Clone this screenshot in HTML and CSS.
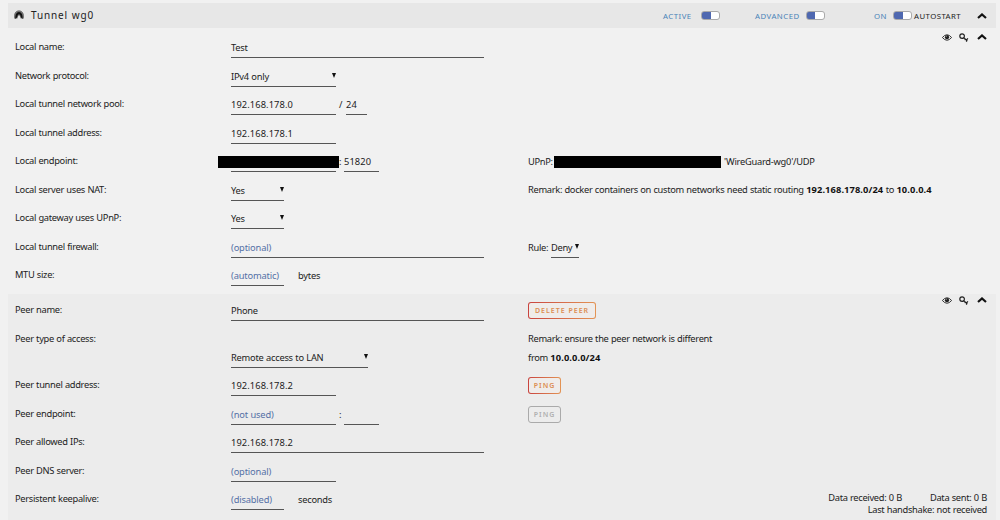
FILE: index.html
```html
<!DOCTYPE html>
<html lang="en">
<head>
  <meta charset="UTF-8">
  <title>Tunnel wg0</title>
  <link rel="stylesheet" href="styles.css">
</head>
<body>
  <!-- Icons used more than once -->
  <svg class="sprite">
    <symbol id="up" viewBox="0 0 10 6"><path d="M1 5.1 L5 1.4 L9 5.1" fill="none" stroke="#111" stroke-width="2.1"/></symbol>
    <symbol id="eye" viewBox="0 0 10 7">
      <path d="M.4 3.5 Q5 -2 9.6 3.5 Q5 9 .4 3.5Z" fill="none" stroke="#222" stroke-width=".9"/>
      <circle cx="5" cy="3.2" r="2.1" fill="#222"/>
      <path d="M3.9 3 Q4 2 5 1.9" fill="none" stroke="#ddd" stroke-width=".5"/>
    </symbol>
    <symbol id="key" viewBox="0 0 10 9">
      <circle cx="3.1" cy="3.1" r="2.3" fill="none" stroke="#222" stroke-width="1.2"/>
      <path d="M4.8 4.6 L8.3 8 M6.3 6 L5.5 6.8 M8 7.7 L7.1 8.5 M8.9 5.4 L7.4 7" fill="none" stroke="#222" stroke-width="1.2"/>
    </symbol>
  </svg>

  <div class="title-bar">
    <svg class="logo" viewBox="0 0 10 10">
      <path d="M.7 8.6 C-.3 4 1.6 .8 5 .8 C8.4 .8 10.3 4 9.3 8.6" fill="#777" stroke="#555" stroke-width=".6"/>
      <path d="M1.4 9 C1 5 2.4 2 5 2 C7.6 2 9 5 8.6 9 L6.7 7 L6.2 5 L5 4.2 L3.8 5 L3.3 7Z" fill="#111"/>
      <path d="M3.2 9.5 L4 6.6 L5 5.2 L6 6.6 L6.8 9.5Z" fill="#e8e8e8"/>
    </svg>
    <h1>Tunnel wg0</h1>
    <div class="switches">
      <span class="switch-label active-label">ACTIVE</span><span class="switch"></span>
      <span class="switch-label advanced-label">ADVANCED</span><span class="switch"></span>
      <span class="switch-label on-label">ON</span><span class="switch"></span>
      <span class="autostart">AUTOSTART</span>
      <svg class="up"><use href="#up"/></svg>
    </div>
  </div>

  <!-- Local side -->
  <div class="panel local">
    <div class="tools">
      <svg class="eye"><use href="#eye"/></svg>
      <svg class="key"><use href="#key"/></svg>
      <svg class="up"><use href="#up"/></svg>
    </div>
    <div class="row">
      <div class="label">Local name:</div>
      <div class="value"><span class="field wide">Test</span></div>
    </div>
    <div class="row">
      <div class="label">Network protocol:</div>
      <div class="value"><span class="field select medium">IPv4 only</span></div>
    </div>
    <div class="row">
      <div class="label">Local tunnel network pool:</div>
      <div class="value"><span class="field number medium">192.168.178.0</span><span class="slash">/</span><span class="field number mask">24</span></div>
    </div>
    <div class="row">
      <div class="label">Local tunnel address:</div>
      <div class="value"><span class="field number medium">192.168.178.1</span></div>
    </div>
    <div class="row">
      <div class="label">Local endpoint:</div>
      <div class="value"><span class="field medium"><span class="redacted address"></span></span><span class="colon">:</span><span class="field number port">51820</span></div>
      <div class="note"><span class="upnp">UPnP:</span><span class="redacted mapping"></span><span class="rule-name">'WireGuard-wg0'/UDP</span></div>
    </div>
    <div class="row">
      <div class="label">Local server uses NAT:</div>
      <div class="value"><span class="field select small">Yes</span></div>
      <div class="note remark">Remark: docker containers on custom networks need static routing <b>192.168.178.0/24</b> to <b>10.0.0.4</b></div>
    </div>
    <div class="row">
      <div class="label">Local gateway uses UPnP:</div>
      <div class="value"><span class="field select small">Yes</span></div>
    </div>
    <div class="row">
      <div class="label">Local tunnel firewall:</div>
      <div class="value"><span class="field empty wide">(optional)</span></div>
      <div class="note"><span class="rule">Rule:</span><span class="field select deny">Deny</span></div>
    </div>
    <div class="row">
      <div class="label">MTU size:</div>
      <div class="value"><span class="field empty small">(automatic)</span><span class="unit">bytes</span></div>
    </div>
  </div>

  <!-- Peer side -->
  <div class="panel peer">
    <div class="tools">
      <svg class="eye"><use href="#eye"/></svg>
      <svg class="key"><use href="#key"/></svg>
      <svg class="up"><use href="#up"/></svg>
    </div>
    <div class="row">
      <div class="label">Peer name:</div>
      <div class="value"><span class="field wide">Phone</span></div>
      <div class="note"><button class="delete">DELETE PEER</button></div>
    </div>
    <div class="row access">
      <div class="label">Peer type of access:</div>
      <div class="value"><span class="field select type">Remote access to LAN</span></div>
      <div class="note remark">Remark: ensure the peer network is different<br>from <b>10.0.0.0/24</b></div>
    </div>
    <div class="row">
      <div class="label">Peer tunnel address:</div>
      <div class="value"><span class="field number medium">192.168.178.2</span></div>
      <div class="note"><button>PING</button></div>
    </div>
    <div class="row">
      <div class="label">Peer endpoint:</div>
      <div class="value"><span class="field empty medium">(not used)</span><span class="colon">:</span><span class="field port"></span></div>
      <div class="note"><button disabled>PING</button></div>
    </div>
    <div class="row">
      <div class="label">Peer allowed IPs:</div>
      <div class="value"><span class="field number wide">192.168.178.2</span></div>
    </div>
    <div class="row">
      <div class="label">Peer DNS server:</div>
      <div class="value"><span class="field empty medium">(optional)</span></div>
    </div>
    <div class="row">
      <div class="label">Persistent keepalive:</div>
      <div class="value"><span class="field empty small">(disabled)</span><span class="unit">seconds</span></div>
      <div class="stats">
        <div><span>Data received: 0 B</span><span class="sent">Data sent: 0 B</span></div>
        <div>Last handshake: not received</div>
      </div>
    </div>
  </div>
</body>
</html>
```

FILE: styles.css
```css
* {
  box-sizing: border-box;
}

body {
  margin: 0;
  height: 520px;
  overflow: hidden;
  padding: 3px 4px 0 8px;
  background: #f1f1f1;
  color: #222;
  font-family: "Noto Sans", sans-serif;
  font-size: 9.3px;
  letter-spacing: -0.31px;
  word-spacing: 0.3px;
}

.sprite {
  display: none;
}

.title-bar {
  display: flex;
  align-items: center;
  height: 25px;
  padding: 0 9px 0 6px;
  background: #e7e7e7;
}

.logo {
  width: 10px;
  height: 10px;
  margin-top: -2px;
}

h1 {
  margin: 0 0 1px 7px;
  font-size: 10px;
  font-weight: normal;
  letter-spacing: 0.85px;
}

.switches {
  display: flex;
  align-items: center;
  margin-left: auto;
}

.switch-label {
  color: #4a83b8;
  font-size: 7.8px;
  letter-spacing: 0.48px;
}

.active-label {
  width: 38px;
}

.advanced-label {
  width: 51px;
  margin-left: 35px;
}

.on-label {
  width: 19px;
  margin-left: 49px;
}

.switch {
  width: 19px;
  height: 9px;
  border: 1px solid #aaa;
  border-radius: 3px;
  background: linear-gradient(to right, #4f68b0 50%, #fff 50%);
}

.autostart {
  width: 63px;
  margin-left: 2px;
  font-size: 7.8px;
  letter-spacing: 0.43px;
}

.up {
  width: 10px;
  height: 6px;
}

.panel {
  position: relative;
}

.local {
  height: 266px;
  padding: 5px 0 0 7px;
}

.peer {
  height: 226px;
  padding: 2px 0 0 7px;
  background: #ececec;
}

.tools {
  position: absolute;
  top: 4px;
  right: 9px;
  display: flex;
  align-items: center;
  height: 10px;
}

.peer .tools {
  top: 1px;
}

.eye {
  width: 10px;
  height: 7px;
}

.key {
  width: 10px;
  height: 9px;
  margin: 0 8px 0 7px;
}

.row {
  display: grid;
  grid-template-columns: 216px 297px 1fr;
  height: 28.5px;
  padding-top: 5px;
  line-height: 19px;
  white-space: nowrap;
}

.label {
  margin-top: -1px;
}

.value,
.note {
  display: flex;
  align-items: flex-start;
}

.value {
  letter-spacing: -0.24px;
}

.field {
  height: 20px;
  border-bottom: 1px solid #555;
}

.wide {
  width: 253px;
}

.medium {
  width: 105px;
}

.small {
  width: 53px;
}

.mask {
  width: 21px;
}

.port {
  width: 35px;
}

.deny {
  width: 28px;
}

.number {
  letter-spacing: 0.1px;
}

.empty {
  color: #5470a6;
  letter-spacing: -0.16px;
}

.select {
  display: flex;
  justify-content: space-between;
}

.select::after {
  content: "";
  margin-top: 6px;
  border: solid transparent;
  border-width: 5px 2.5px 0;
  border-top-color: #111;
}

.slash,
.colon {
  width: 8px;
  padding-left: 3px;
}

.slash {
  width: 10px;
}

.unit {
  margin-left: 14px;
}

.redacted {
  display: block;
  height: 12px;
  background: #000;
}

.address {
  width: 121px;
  margin: 4px 0 0 -13px;
}

.mapping {
  width: 167px;
  margin: 4px 3px 0 0;
}

.upnp {
  width: 26px;
}

.rule-name {
  letter-spacing: -0.25px;
}

.rule {
  width: 23px;
}

.remark {
  display: block;
  margin-top: -1px;
}

b {
  color: #111;
  letter-spacing: 0.1px;
}

.access {
  height: 46.6px;
}

.type {
  width: 137px;
  margin-top: 18px;
}

button {
  width: 33px;
  height: 17px;
  margin-top: 1px;
  padding: 0;
  border: 1px solid transparent;
  border-radius: 3px;
  background: linear-gradient(#efecea, #efecea) padding-box, linear-gradient(to right, #c9443f, #e39455) border-box;
  color: #dc8c51;
  font-family: inherit;
  font-size: 7px;
  font-weight: 600;
  letter-spacing: 1px;
}

.delete {
  width: 68px;
}

button:disabled {
  border-color: #aaa;
  background: none;
  color: #b0b0b0;
}

.stats {
  padding: 2px 9px 0 0;
  line-height: 12px;
  text-align: right;
}

.sent {
  margin-left: 28px;
}
```
